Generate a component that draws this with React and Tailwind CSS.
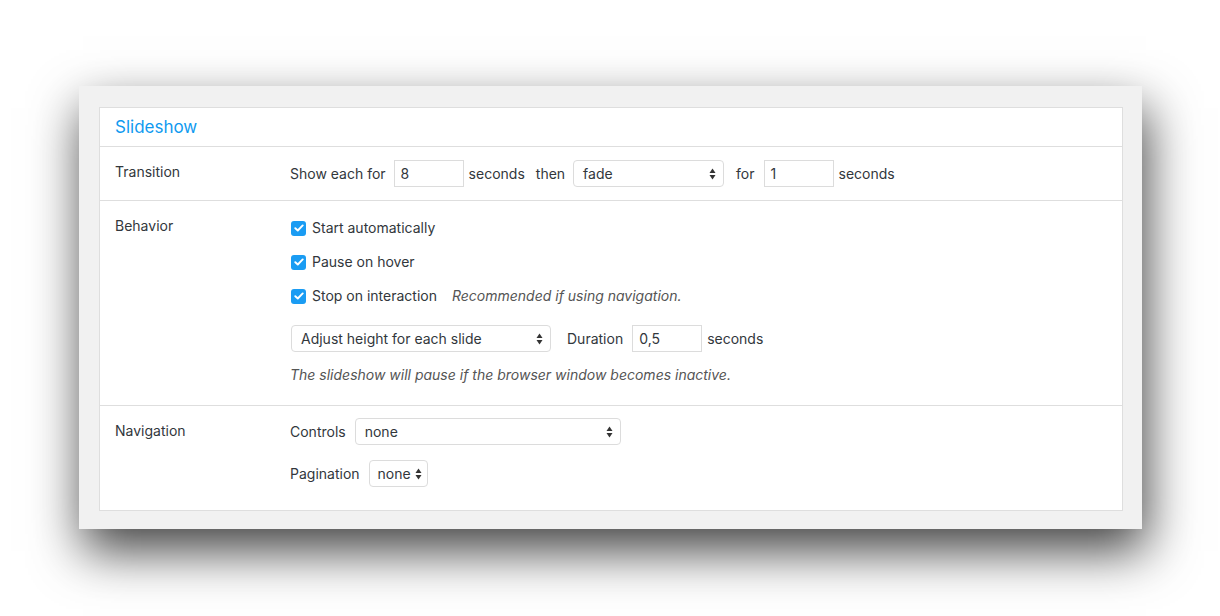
const Arrows = () => (
  <svg width="7" height="12" viewBox="0 0 7 12" className="shrink-0">
    <path d="M3.5 0.5 L6.5 5 L0.5 5 Z" fill="#333" />
    <path d="M3.5 11.5 L6.5 7 L0.5 7 Z" fill="#333" />
  </svg>
);

const Field = ({ value, className = "" }) => (
  <div className={`h-[27px] w-[70px] border border-[#dcdcdc] bg-white px-[6px] flex items-center ${className}`}>
    {value}
  </div>
);

const Select = ({ value, className = "" }) => (
  <div
    className={`h-[27px] border border-[#dcdcdc] rounded-[4px] bg-white flex items-center justify-between gap-[3px] ${className}`}
  >
    <span>{value}</span>
    <Arrows />
  </div>
);

const Check = ({ label, children }) => (
  <div className="flex items-center h-5">
    <div className="w-[15px] h-[15px] rounded-[3px] bg-[#1a9cf3] flex items-center justify-center ml-[1px]">
      <svg width="10" height="8" viewBox="0 0 10 8">
        <path d="M1.3 4.2 L3.8 6.5 L8.7 1.4" fill="none" stroke="white" strokeWidth="1.9" strokeLinecap="round" strokeLinejoin="round" />
      </svg>
    </div>
    <span className="ml-[6px]">{label}</span>
    {children}
  </div>
);

const Row = ({ label, className = "", children }) => (
  <div className={`flex border-b border-[#dedede] ${className}`}>
    <div className="w-[190px] shrink-0 pl-[15px] pt-[15px]">{label}</div>
    <div className="flex-1">{children}</div>
  </div>
);

export default function App() {
  return (
    <div
      className="min-h-screen bg-white pt-[86px] pl-[79px] text-[14px] leading-5 text-[#32373c]"
      style={{ fontFamily: "Inter, 'Open Sans', sans-serif" }}
    >
      <div className="w-[1063px] bg-[#f1f1f1] pt-[21px] pl-[20px] pb-[18px] shadow-[4px_22px_48px_rgba(0,0,0,0.74)]">
        <div className="w-[1024px] border border-[#dedede] bg-white">
          <div className="h-[39px] border-b border-[#dedede] pl-[15px] flex items-center text-[17px] text-[#0f9af0]">
            Slideshow
          </div>

          <Row label="Transition" className="h-[54px]">
            <div className="flex items-center pt-[13px]">
              <span>Show each for</span>
              <Field value="8" className="ml-[8px]" />
              <span className="ml-[5px]">seconds</span>
              <span className="ml-[11px]">then</span>
              <Select value="fade" className="ml-[8px] w-[151px] pl-[9px] pr-[7px]" />
              <span className="ml-[12px]">for</span>
              <Field value="1" className="ml-[9px]" />
              <span className="ml-[5px]">seconds</span>
            </div>
          </Row>

          <Row label="Behavior" className="h-[205px]">
            <div className="flex flex-col pt-[17px]">
              <div className="flex flex-col gap-[14px]">
                <Check label="Start automatically" />
                <Check label="Pause on hover" />
                <Check label="Stop on interaction">
                  <span className="ml-[15px] italic text-[#555]">Recommended if using navigation.</span>
                </Check>
              </div>
              <div className="flex items-center mt-[19px]">
                <Select value="Adjust height for each slide" className="w-[260px] ml-[1px] pl-[9px] pr-[7px]" />
                <span className="ml-[16px]">Duration</span>
                <Field value="0,5" className="ml-[9px]" />
                <span className="ml-[5px]">seconds</span>
              </div>
              <div className="mt-[13px] italic text-[#555]">
                The slideshow will pause if the browser window becomes inactive.
              </div>
            </div>
          </Row>

          <Row label="Navigation" className="h-[104px] border-b-0">
            <div className="flex flex-col pt-[12px] gap-[15px]">
              <div className="flex items-center">
                <span>Controls</span>
                <Select value="none" className="ml-[9px] w-[266px] pl-[9px] pr-[7px]" />
              </div>
              <div className="flex items-center">
                <span>Pagination</span>
                <Select value="none" className="ml-[9px] w-[59px] pl-[8px] pr-[5px]" />
              </div>
            </div>
          </Row>
        </div>
      </div>
    </div>
  );
}
